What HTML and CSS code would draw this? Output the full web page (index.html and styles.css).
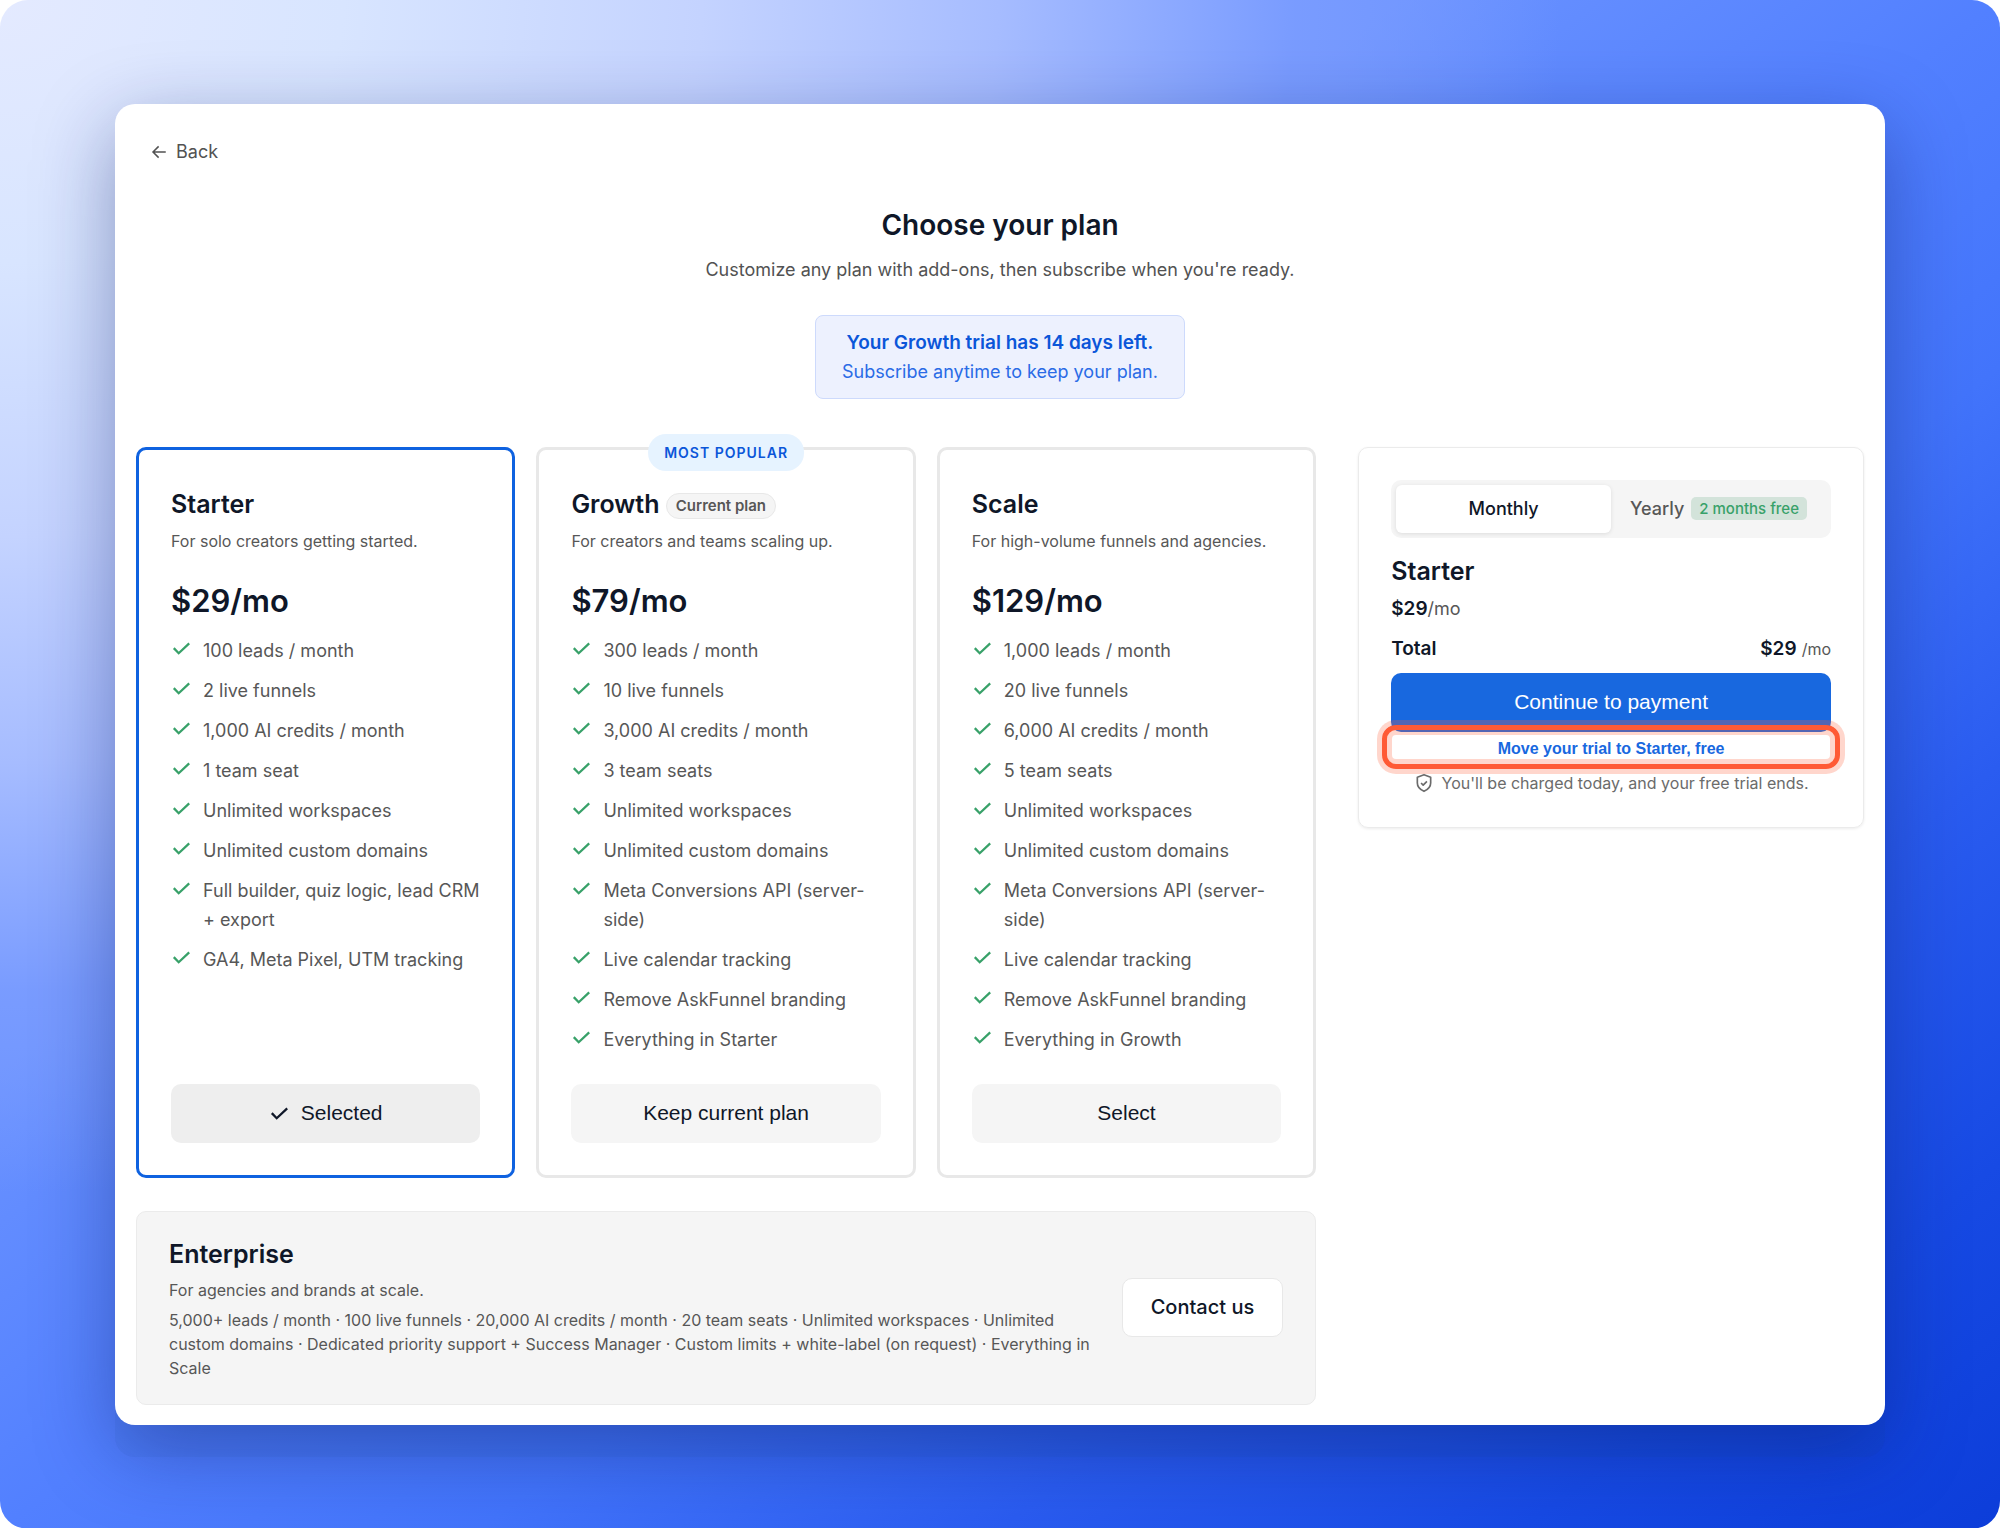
FILE: index.html
```html
<!DOCTYPE html>
<html lang="en">
<head>
  <meta charset="UTF-8">
  <meta name="viewport" content="width=device-width, initial-scale=1.0">
  <title>Choose your plan</title>
  <link rel="stylesheet" href="styles.css">
</head>
<body>
  <!-- Shared icons -->
  <svg class="icon-defs" aria-hidden="true">
    <symbol id="check" viewBox="0 0 24 24">
      <path d="M3.200 11.600l5.600 5.800L20.800 6.200" fill="none" stroke="currentColor" stroke-width="2.6"/>
    </symbol>
  </svg>

  <div class="backdrop">
    <main class="window">
      <a class="back" href="#">
        <svg width="18" height="18" viewBox="0 0 24 24" fill="none" stroke="currentColor" stroke-width="2"><path d="M21 12H4.500M11.500 4.500L4 12l7.500 7.500"/></svg>
        Back
      </a>

      <header class="intro">
        <h1>Choose your plan</h1>
        <p class="lead">Customize any plan with add-ons, then subscribe when you're ready.</p>
        <div class="notice">
          <strong>Your Growth trial has 14 days left.</strong>
          <span>Subscribe anytime to keep your plan.</span>
        </div>
      </header>

      <div class="layout">
        <div class="plans-column">
          <div class="plans">
            <section class="plan selected">
              <h2>Starter</h2>
              <p class="tagline">For solo creators getting started.</p>
              <p class="price">$29/mo</p>
              <ul class="features">
                <li><svg><use href="#check"/></svg>100 leads / month</li>
                <li><svg><use href="#check"/></svg>2 live funnels</li>
                <li><svg><use href="#check"/></svg>1,000 AI credits / month</li>
                <li><svg><use href="#check"/></svg>1 team seat</li>
                <li><svg><use href="#check"/></svg>Unlimited workspaces</li>
                <li><svg><use href="#check"/></svg>Unlimited custom domains</li>
                <li><svg><use href="#check"/></svg>Full builder, quiz logic, lead CRM + export</li>
                <li><svg><use href="#check"/></svg>GA4, Meta Pixel, UTM tracking</li>
              </ul>
              <button type="button" class="btn"><svg><use href="#check"/></svg>Selected</button>
            </section>

            <section class="plan">
              <span class="popular">MOST POPULAR</span>
              <h2>Growth <span class="current">Current plan</span></h2>
              <p class="tagline">For creators and teams scaling up.</p>
              <p class="price">$79/mo</p>
              <ul class="features">
                <li><svg><use href="#check"/></svg>300 leads / month</li>
                <li><svg><use href="#check"/></svg>10 live funnels</li>
                <li><svg><use href="#check"/></svg>3,000 AI credits / month</li>
                <li><svg><use href="#check"/></svg>3 team seats</li>
                <li><svg><use href="#check"/></svg>Unlimited workspaces</li>
                <li><svg><use href="#check"/></svg>Unlimited custom domains</li>
                <li><svg><use href="#check"/></svg>Meta Conversions API (server-side)</li>
                <li><svg><use href="#check"/></svg>Live calendar tracking</li>
                <li><svg><use href="#check"/></svg>Remove AskFunnel branding</li>
                <li><svg><use href="#check"/></svg>Everything in Starter</li>
              </ul>
              <button type="button" class="btn">Keep current plan</button>
            </section>

            <section class="plan">
              <h2>Scale</h2>
              <p class="tagline">For high-volume funnels and agencies.</p>
              <p class="price">$129/mo</p>
              <ul class="features">
                <li><svg><use href="#check"/></svg>1,000 leads / month</li>
                <li><svg><use href="#check"/></svg>20 live funnels</li>
                <li><svg><use href="#check"/></svg>6,000 AI credits / month</li>
                <li><svg><use href="#check"/></svg>5 team seats</li>
                <li><svg><use href="#check"/></svg>Unlimited workspaces</li>
                <li><svg><use href="#check"/></svg>Unlimited custom domains</li>
                <li><svg><use href="#check"/></svg>Meta Conversions API (server-side)</li>
                <li><svg><use href="#check"/></svg>Live calendar tracking</li>
                <li><svg><use href="#check"/></svg>Remove AskFunnel branding</li>
                <li><svg><use href="#check"/></svg>Everything in Growth</li>
              </ul>
              <button type="button" class="btn">Select</button>
            </section>
          </div>

          <section class="enterprise">
            <div class="enterprise-text">
              <h2>Enterprise</h2>
              <p class="tagline">For agencies and brands at scale.</p>
              <p class="details">5,000+ leads / month · 100 live funnels · 20,000 AI credits / month · 20 team seats · Unlimited workspaces · Unlimited custom domains · Dedicated priority support + Success Manager · Custom limits + white-label (on request) · Everything in Scale</p>
            </div>
            <a class="contact" href="#">Contact us</a>
          </section>
        </div>

        <aside class="summary">
          <div class="billing">
            <button type="button" class="active">Monthly</button>
            <button type="button">Yearly <span class="free">2 months free</span></button>
          </div>
          <h2>Starter</h2>
          <p class="rate"><strong>$29</strong>/mo</p>
          <div class="total">
            <strong>Total</strong>
            <span><strong>$29</strong> <small>/mo</small></span>
          </div>
          <button type="button" class="pay">Continue to payment</button>
          <button type="button" class="move">Move your trial to Starter, free</button>
          <p class="charge">
            <svg width="20" height="20" viewBox="0 0 24 24" fill="none" stroke="currentColor" stroke-width="2" stroke-linejoin="round"><path d="M12 2l8 3v7c0 5-3.500 8-8 10-4.500-2-8-5-8-10V5z"/><path d="M8.500 12l2.500 2.500 4.500-4.500"/></svg>
            You'll be charged today, and your free trial ends.
          </p>
        </aside>
      </div>
    </main>
  </div>
</body>
</html>
```
FILE: styles.css
```css
* {
  box-sizing: border-box;
}
body {
  margin: 0;
  background: #fff;
  color: #0f1728;
  font-family: Inter, "Liberation Sans", sans-serif;
  font-size: 18px;
  line-height: 29px;
}
h1, h2, p, ul {
  margin: 0;
  padding: 0;
}
a {
  color: inherit;
  text-decoration: none;
}
button {
  border: 0;
  cursor: pointer;
  color: inherit;
}
strong {
  font-size: 19px;
  font-weight: 600;
}
.icon-defs {
  position: absolute;
  width: 0;
  height: 0;
}
.backdrop {
  min-height: 100vh;
  padding: 104px 115px;
  border-radius: 28px;
  background:
    radial-gradient(ellipse 78% 78% at 0 0, #e4eaff 0%, #d8e5ff 22%, #c4d3ff 45%, #a6bcff 64%, rgba(125, 158, 255, 0.8) 83%, rgba(100, 143, 255, 0) 100%),
    linear-gradient(to bottom right, #6a92ff 35%, #5280ff 50%, #4274fb 62%, #2a5cf0 75%, #174ae4 88%, #0c3dd9 100%);
}
.window {
  padding: 0 21px 20px;
  border-radius: 20px;
  background: #fff;
  box-shadow: 0 32px 0 rgba(16, 60, 120, 0.06), 0 24px 80px rgba(10, 25, 100, 0.4);
}
.back {
  display: inline-flex;
  align-items: center;
  gap: 8px;
  margin: 33px 0 0 14px;
  color: #525252;
}

/* Page heading */
.intro {
  display: flex;
  flex-direction: column;
  align-items: center;
  margin-top: 36px;
  text-align: center;
}
h1 {
  font-size: 28px;
  line-height: 40px;
  font-weight: 600;
}
.lead {
  margin-top: 10px;
  color: #525252;
}
.notice {
  display: flex;
  flex-direction: column;
  margin-top: 31px;
  padding: 12px 26px;
  border: 1px solid #cddafc;
  border-radius: 8px;
  background: #edf1fe;
  color: #2a6be6;
}
.notice strong {
  color: #0b56d9;
}

.layout {
  display: grid;
  grid-template-columns: minmax(0, 7fr) minmax(0, 3fr);
  gap: 42px;
  align-items: start;
  margin-top: 48px;
}
.plans {
  display: grid;
  grid-template-columns: repeat(3, minmax(0, 1fr));
  gap: 21px;
}
.plan {
  position: relative;
  display: flex;
  flex-direction: column;
  padding: 38px 32px 32px;
  border: 3px solid #e8e8e8;
  border-radius: 10px;
}
.plan.selected {
  border-color: #0f62e0;
}
h2 {
  font-size: 25px;
  line-height: 32px;
  font-weight: 600;
}
.tagline {
  margin-top: 9px;
  color: #575757;
  font-size: 16px;
  line-height: 24px;
}
.price {
  margin-top: 28px;
  font-size: 31px;
  line-height: 40px;
  font-weight: 600;
}
.popular {
  position: absolute;
  top: -16px;
  left: 50%;
  transform: translateX(-50%);
  padding: 0 16px;
  border-radius: 18px;
  background: #e6f3ff;
  color: #0b56d9;
  font-size: 14px;
  line-height: 37px;
  font-weight: 600;
  letter-spacing: 1px;
  white-space: nowrap;
}
.current {
  display: inline-block;
  padding: 0 9px;
  border: 1px solid #e8e8e8;
  border-radius: 13px;
  background: #f5f5f5;
  color: #575757;
  font-size: 15px;
  line-height: 24px;
  vertical-align: middle;
}
.features {
  display: flex;
  flex-direction: column;
  gap: 11px;
  margin: 15px 0 30px;
  color: #575757;
  list-style: none;
}
.features li {
  display: flex;
  gap: 11px;
}
.features svg {
  flex: none;
  width: 21px;
  height: 21px;
  margin-top: 2px;
  color: #38a169;
}
.btn {
  display: flex;
  align-items: center;
  justify-content: center;
  gap: 11px;
  height: 59px;
  margin-top: auto;
  border-radius: 10px;
  background: #f5f5f5;
  font: 21px "Liberation Sans", Arial, sans-serif;
}
.btn svg {
  width: 21px;
  height: 21px;
}
.selected .btn {
  background: #eee;
}

/* Enterprise row */
.enterprise {
  display: flex;
  align-items: center;
  gap: 24px;
  margin-top: 33px;
  padding: 24px 32px;
  border: 1px solid #ebebeb;
  border-radius: 10px;
  background: #f5f5f5;
}
.enterprise-text {
  flex: 1;
}
.enterprise h2 {
  line-height: 36px;
}
.enterprise .tagline,
.details {
  margin-top: 6px;
}
.details {
  color: #575757;
  font-size: 16px;
  line-height: 24px;
}
.contact {
  padding: 0 28px;
  border: 1px solid #e8e8e8;
  border-radius: 10px;
  background: #fff;
  font-size: 20px;
  line-height: 57px;
  font-weight: 500;
}

/* Order summary */
.summary {
  padding: 32px;
  border: 1px solid #ebebeb;
  border-radius: 10px;
  box-shadow: 0 1px 3px rgba(0, 0, 0, 0.08);
}
.billing {
  display: grid;
  grid-template-columns: 1fr 1fr;
  padding: 5px;
  border-radius: 10px;
  background: #f5f5f5;
}
.billing button {
  display: flex;
  align-items: center;
  justify-content: center;
  gap: 7px;
  height: 48px;
  padding: 0;
  border-radius: 6px;
  background: transparent;
  color: #575757;
  font: 500 18px Inter, "Liberation Sans", sans-serif;
  white-space: nowrap;
}
.billing .active {
  background: #fff;
  color: #0f1728;
  box-shadow: 0 1px 4px rgba(0, 0, 0, 0.1);
}
.free {
  padding: 0 8px;
  border-radius: 5px;
  background: #d3e3da;
  color: #38a169;
  font-size: 15px;
  line-height: 23px;
}
.summary h2 {
  margin-top: 17px;
}
.rate {
  margin-top: 7px;
  color: #575757;
}
.rate strong {
  color: #0f1728;
}
.total {
  display: flex;
  justify-content: space-between;
  margin-top: 11px;
}
.total small {
  color: #575757;
  font-size: 16px;
}
.pay {
  display: block;
  width: 100%;
  height: 59px;
  margin-top: 9px;
  border-radius: 10px;
  background: #1868df;
  color: #fff;
  font: 21px "Liberation Sans", Arial, sans-serif;
}
.move {
  position: relative;
  display: block;
  width: 100%;
  height: 24px;
  margin-top: 3px;
  padding: 4px 0 0;
  background: transparent;
  color: #1868df;
  font: bold 16px "Liberation Sans", Arial, sans-serif;
}
/* Highlight ring */
.move::after {
  content: "";
  position: absolute;
  inset: -10px -9px;
  border: 5px solid #ff5a35;
  border-radius: 14px;
  box-shadow: 0 0 0 5px rgba(255, 90, 53, 0.25), inset 0 0 0 5px rgba(255, 90, 53, 0.25);
}
.charge {
  display: flex;
  align-items: center;
  justify-content: center;
  gap: 8px;
  margin-top: 12px;
  color: #6b6b6b;
  font-size: 16px;
  line-height: 24px;
}
```
